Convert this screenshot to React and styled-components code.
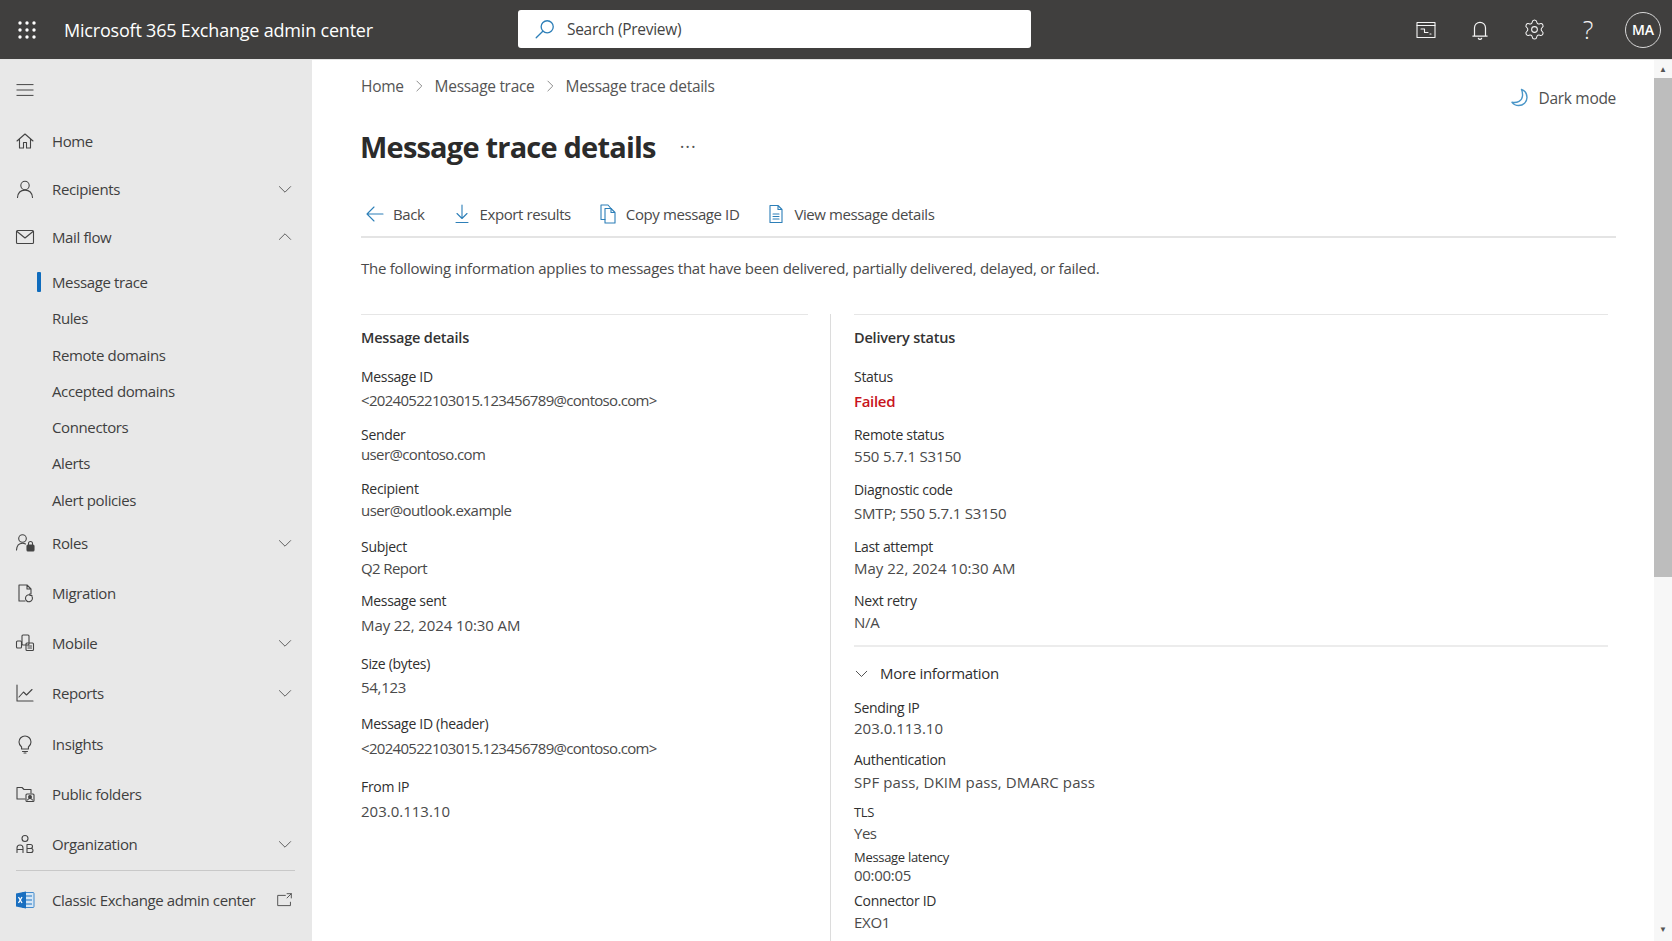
import styled, { createGlobalStyle } from 'styled-components';
import { Settings } from 'lucide-react';

const GlobalStyle = createGlobalStyle`
    html, body {
        margin: 0;
        height: 100%;
        overflow: hidden;
        background: #fff;
        font-family: "Open Sans", "Noto Sans", "Liberation Sans", sans-serif;
        color: #3b3a39;
    }
    * { box-sizing: border-box; }
`;

const Wrap = styled.div`
    display: flex;
    flex-direction: column;
    width: 1672px;
    height: 941px;
    overflow: hidden;
`;

const TopBar = styled.header`
    display: flex;
    align-items: center;
    flex: 0 0 60px;
    height: 60px;
    background: #403f3e;
    border-bottom: 1px solid #e4e4e4;
    color: #fff;
`;

const Waffle = styled.div`
    display: flex;
    justify-content: center;
    width: 54px;
    color: #fff;
`;

const Brand = styled.div`
    width: 454px;
    margin-left: 10px;
    font-size: 18px;
    font-weight: 500;
    letter-spacing: -0.2px;
`;

const SearchBox = styled.div`
    display: flex;
    align-items: center;
    gap: 11px;
    width: 513px;
    height: 38px;
    margin-top: -2px;
    padding-left: 16px;
    background: #fff;
    border-radius: 3px;
    color: #444;
    font-size: 15.5px;
    letter-spacing: -0.3px;
`;

const TopIcons = styled.div`
    display: flex;
    align-items: center;
    margin-left: auto;
    padding-right: 11px;
`;

const TopIcon = styled.div`
    display: flex;
    align-items: center;
    justify-content: center;
    width: 54px;
    color: #f4f4f4;
`;

const HelpMark = styled.span`
    font-size: 25px;
    line-height: 1;
    font-weight: 300;
    color: #f4f4f4;
`;

const Avatar = styled.div`
    display: flex;
    align-items: center;
    justify-content: center;
    width: 36px;
    height: 36px;
    margin-left: 10px;
    border: 1px solid #d8d8d8;
    border-radius: 50%;
    font-size: 14px;
    font-weight: 600;
`;

const Body = styled.div`
    display: flex;
    flex: 1;
    min-height: 0;
`;

const Sidebar = styled.nav`
    flex: 0 0 312px;
    background: #e8e8e8;
`;

const Burger = styled.div`
    display: flex;
    align-items: flex-start;
    height: 57px;
    padding: 21px 0 0 16px;
    color: #444;
`;

const NavRow = styled.div`
    display: flex;
    align-items: center;
    height: ${(p) => p.$h}px;
    padding: 0 19px 0 15px;
    font-size: 15px;
    letter-spacing: -0.38px;
    color: #3f3f3f;
`;

const NavIcon = styled.span`
    display: flex;
    justify-content: center;
    width: 20px;
    margin-right: 17px;
    color: #444;
`;

const Chevron = styled.span`
    display: flex;
    margin-left: auto;
    color: #4c4c4c;
`;

const SubList = styled.div`
    margin-top: 3px;
`;

const SubRow = styled.div`
    display: flex;
    align-items: center;
    position: relative;
    height: 36.25px;
    padding-left: 52px;
    font-size: 15px;
    letter-spacing: -0.38px;
    color: #3f3f3f;
`;

const ActiveBar = styled.span`
    position: absolute;
    left: 37px;
    top: 8px;
    width: 4px;
    height: 20px;
    border-radius: 1px;
    background: #0f6cbd;
`;

const NavDivider = styled.div`
    height: 1px;
    margin: 1px 17px 0 16px;
    background: #c8c8c8;
`;

const Main = styled.main`
    display: flex;
    flex: 1;
    min-width: 0;
`;

const Content = styled.div`
    display: flex;
    flex-direction: column;
    flex: 1;
    min-width: 0;
    padding: 14px 38px 0 49px;
`;

const TopRow = styled.div`
    display: flex;
    justify-content: space-between;
    align-items: flex-start;
    height: 50px;
`;

const Crumbs = styled.div`
    display: flex;
    align-items: center;
    height: 24px;
    font-size: 15.5px;
    letter-spacing: -0.3px;
    color: #555;
`;

const CrumbSep = styled.span`
    display: flex;
    margin: 0 8.5px;
    color: #777;
`;

const DarkMode = styled.div`
    display: flex;
    align-items: center;
    gap: 8px;
    margin-top: 13px;
    font-size: 15.5px;
    letter-spacing: -0.3px;
    color: #505050;
`;

const TitleRow = styled.div`
    display: flex;
    align-items: center;
    gap: 24px;
    margin-top: 2px;
    height: 40px;
`;

const Title = styled.h1`
    margin: 0 0 0 -1px;
    font-size: 29px;
    font-weight: 700;
    letter-spacing: -0.8px;
    color: #2b2b2b;
`;

const More = styled.span`
    font-size: 18px;
    letter-spacing: 1px;
    color: #555;
`;

const Toolbar = styled.div`
    display: flex;
    align-items: center;
    gap: 27px;
    height: 41px;
    margin-top: 31px;
    padding: 0 0 5px 4px;
    border-bottom: 2px solid #e4e4e4;
`;

const ToolButton = styled.div`
    display: flex;
    align-items: center;
    gap: 8px;
    font-size: 15px;
    letter-spacing: -0.4px;
    color: #4a4a4a;
`;

const ToolIcon = styled.span`
    display: flex;
    color: #2d7fb8;
`;

const Intro = styled.p`
    margin: 19px 0 0;
    font-size: 15px;
    line-height: 22px;
    letter-spacing: -0.25px;
    color: #4a4a4a;
`;

const Columns = styled.div`
    display: flex;
    flex: 1;
    margin-top: 35px;
    min-height: 0;
`;

const LeftCol = styled.section`
    flex: 0 0 447px;
    padding-top: 12px;
    border-top: 1px solid #e6e6e6;
`;

const RightCol = styled.section`
    flex: 1;
    margin-left: 22px;
    padding-left: 23px;
    padding-right: 8px;
    border-left: 1px solid #dcdcdc;
`;

const RightInner = styled.div`
    padding-top: 12px;
    border-top: 1px solid #e6e6e6;
`;

const Heading = styled.h2`
    margin: 0;
    font-size: 14.5px;
    line-height: 22px;
    font-weight: 600;
    letter-spacing: -0.2px;
    color: #333;
`;

const FieldBox = styled.div`
    margin-top: ${(p) => p.$e - 20}px;
`;

const Label = styled.div`
    font-size: ${(p) => (p.$small ? 13 : 14)}px;
    line-height: 20px;
    font-weight: 500;
    letter-spacing: -0.3px;
    color: #2f2f2f;
`;

const Value = styled.div`
    margin-top: ${(p) => p.$d - 22}px;
    font-size: 15px;
    line-height: 22px;
    letter-spacing: ${(p) => p.$sp}px;
    color: ${(p) => (p.$failed ? '#c8141c' : '#4a4a4a')};
    font-weight: ${(p) => (p.$failed ? 600 : 400)};
`;

const SectionLine = styled.div`
    height: 2px;
    margin-top: 12px;
    background: #ececec;
`;

const MoreInfo = styled.div`
    display: flex;
    align-items: center;
    gap: 11px;
    height: 24px;
    margin-top: 14px;
    font-size: 15px;
    font-weight: 500;
    letter-spacing: -0.3px;
    color: #2f2f2f;
`;

const ScrollTrack = styled.div`
    display: flex;
    flex-direction: column;
    align-items: stretch;
    flex: 0 0 18px;
    background: #f7f7f7;
`;

const ScrollArrow = styled.div`
    display: flex;
    justify-content: center;
    align-items: center;
    height: 18px;
    margin-top: ${(p) => p.$top || 0}px;
    color: #555;
    font-size: 8px;
    line-height: 1;
`;

const ScrollThumb = styled.div`
    height: 499px;
    background: #bdbdbd;
`;

const Ico = ({ size = 20, width = 1.1, children }) => (
    <svg width={size} height={size} viewBox="0 0 20 20" fill="none" stroke="currentColor" strokeWidth={width} strokeLinecap="round" strokeLinejoin="round">
        {children}
    </svg>
);

const ChevronDown = ({ size = 16 }) => (
    <Ico size={size}><path d="M3 7l7 7 7-7" /></Ico>
);
const ChevronUp = () => (
    <Ico size={16}><path d="M3 13l7-7 7 7" /></Ico>
);
const ChevronRight = () => (
    <Ico size={14} width={1.2}><path d="M7 3l7 7-7 7" /></Ico>
);

const navIcons = {
    home: <path d="M2 10l8-7 8 7M4.500 8v9h4v-5.500h3V17h4V8" />,
    person: <><circle cx="10" cy="6.500" r="4.200" /><path d="M2.500 18.500c.4-4.600 3.300-7.400 7.500-7.400s7.100 2.800 7.500 7.400" /></>,
    mail: <><rect x="1.500" y="3.500" width="17" height="13" rx="1" /><path d="M2 4.500l8 6.500 8-6.500" /></>,
    roles: <><circle cx="7.500" cy="5.500" r="3.800" /><path d="M1.500 17c.3-4.300 2.600-6.800 6-6.800 1.200 0 2.200.3 3 .8" /><rect x="12" y="12" width="7" height="6" rx="1" fill="currentColor" /><path d="M13.500 12v-1.500a2 2 0 014 0V12" /></>,
    migration: <><path d="M4 18V2h8l4 4v5M12 2v4h4M4 18h6" /><path d="M17 13.500a3.500 3.500 0 11-2-1.600M15 10.500v2h2" /></>,
    mobile: <><rect x="7" y="2" width="7" height="10" rx="1" /><rect x="1.500" y="8" width="5" height="7" rx="1" /><rect x="11" y="10" width="7.500" height="7.500" rx="1" /><path d="M13 13h3.500M13 15h3.500" /></>,
    reports: <><path d="M2 2v16h16" /><path d="M4 14l4.500-5 3 3 5.500-5.500" /></>,
    insights: <><path d="M6.600 13c-1.500-1.200-2.600-2.800-2.600-5a6 6 0 0112 0c0 2.200-1.100 3.800-2.600 5v2H6.600z" /><path d="M7.500 17.500h5M9 19h2" /></>,
    folders: <><path d="M2 15V3.500h5l2 2h7V9M2 15h8" /><rect x="11" y="10" width="8" height="7.500" rx="1" /><circle cx="15" cy="13" r="1.400" fill="currentColor" /><path d="M12.500 16c.6-1 1.400-1.500 2.500-1.500s1.900.5 2.500 1.500" /></>,
    org: <><circle cx="10" cy="4.500" r="3" /><path d="M2 18.500v-4.500a3 3 0 016 0v4.500M2 15.500h6M12 18.500v-8h3.500a2 2 0 010 4H12h4a2 2 0 010 4z" /></>,
};

const navTop = [
    { icon: 'home', label: 'Home' },
    { icon: 'person', label: 'Recipients', chevron: 'down' },
    { icon: 'mail', label: 'Mail flow', chevron: 'up' },
];

const subItems = ['Message trace', 'Rules', 'Remote domains', 'Accepted domains', 'Connectors', 'Alerts', 'Alert policies'];

const navBottom = [
    { icon: 'roles', label: 'Roles', chevron: 'down' },
    { icon: 'migration', label: 'Migration' },
    { icon: 'mobile', label: 'Mobile', chevron: 'down' },
    { icon: 'reports', label: 'Reports', chevron: 'down' },
    { icon: 'insights', label: 'Insights' },
    { icon: 'folders', label: 'Public folders' },
    { icon: 'org', label: 'Organization', chevron: 'down' },
];

const leftFields = [
    { label: 'Message ID', value: '<20240522103015.123456789@contoso.com>', e: 38, d: 24, sp: -0.69 },
    { label: 'Sender', value: 'user@contoso.com', e: 34, d: 20, sp: -0.63 },
    { label: 'Recipient', value: 'user@outlook.example', e: 34, d: 22, sp: -0.55 },
    { label: 'Subject', value: 'Q2 Report', e: 36, d: 22, sp: -0.6 },
    { label: 'Message sent', value: 'May 22, 2024 10:30 AM', e: 32, d: 25, sp: -0.1 },
    { label: 'Size (bytes)', value: '54,123', e: 38, d: 24, sp: -0.3 },
    { label: 'Message ID (header)', value: '<20240522103015.123456789@contoso.com>', e: 36, d: 25, sp: -0.69 },
    { label: 'From IP', value: '203.0.113.10', e: 38, d: 25, sp: 0 },
];

const statusFields = [
    { label: 'Status', value: 'Failed', e: 38, d: 25, failed: true, sp: -0.3 },
    { label: 'Remote status', value: '550 5.7.1 S3150', e: 33, d: 22, sp: -0.16 },
    { label: 'Diagnostic code', value: 'SMTP; 550 5.7.1 S3150', e: 33, d: 24, sp: -0.2 },
    { label: 'Last attempt', value: 'May 22, 2024 10:30 AM', e: 33, d: 22, sp: 0 },
    { label: 'Next retry', value: 'N/A', e: 32, d: 22, sp: -0.3 },
];

const moreFields = [
    { label: 'Sending IP', value: '203.0.113.10', e: 33, d: 21, sp: 0 },
    { label: 'Authentication', value: 'SPF pass, DKIM pass, DMARC pass', e: 31, d: 23, sp: 0.1 },
    { label: 'TLS', value: 'Yes', e: 29, d: 22, small: true, sp: -0.5 },
    { label: 'Message latency', value: '00:00:05', e: 23, d: 19, small: true, sp: -0.3 },
    { label: 'Connector ID', value: 'EXO1', e: 25, d: 22, sp: -0.3 },
];

const Field = ({ label, value, e, d, failed, small, sp }) => (
    <FieldBox $e={e}>
        <Label $small={small}>{label}</Label>
        <Value $d={d} $failed={failed} $sp={sp}>{value}</Value>
    </FieldBox>
);

const NavItem = ({ icon, label, chevron, h }) => (
    <NavRow $h={h}>
        <NavIcon><Ico size={20}>{navIcons[icon]}</Ico></NavIcon>
        {label}
        {chevron && <Chevron>{chevron === 'up' ? <ChevronUp /> : <ChevronDown />}</Chevron>}
    </NavRow>
);

const App = () => (
    <Wrap>
        <GlobalStyle />
        <TopBar>
            <Waffle>
                <svg width="18" height="18" viewBox="0 0 18 18" fill="currentColor">
                    {[2, 9, 16].map((y) => [2, 9, 16].map((x) => <circle key={x + '-' + y} cx={x} cy={y} r="1.7" />))}
                </svg>
            </Waffle>
            <Brand>Microsoft 365 Exchange admin center</Brand>
            <SearchBox>
                <svg width="22" height="22" viewBox="0 0 20 20" fill="none" stroke="#2d7fb8" strokeWidth="1.2" strokeLinecap="round">
                    <circle cx="12" cy="8" r="5.500" />
                    <path d="M8 12l-6 6" />
                </svg>
                Search (Preview)
            </SearchBox>
            <TopIcons>
                <TopIcon>
                    <Ico>
                        <rect x="1" y="2.500" width="18" height="15" />
                        <path d="M1 5.500h18M5 9h3.500v3.500H12M14 14h1" />
                    </Ico>
                </TopIcon>
                <TopIcon>
                    <Ico size={22}>
                        <path d="M5 15V8a5 5 0 0110 0v7M3.500 15.500h13M8.500 17.500a1.600 1.600 0 003 0" />
                    </Ico>
                </TopIcon>
                <TopIcon><Settings size={23} strokeWidth={1.1} /></TopIcon>
                <TopIcon><HelpMark>?</HelpMark></TopIcon>
                <Avatar>MA</Avatar>
            </TopIcons>
        </TopBar>
        <Body>
            <Sidebar>
                <Burger>
                    <Ico size={18}><path d="M1 4h18M1 10h18M1 16h18" /></Ico>
                </Burger>
                {navTop.map((item) => <NavItem key={item.label} {...item} h={48} />)}
                <SubList>
                    {subItems.map((label, i) => (
                        <SubRow key={label}>
                            {i === 0 && <ActiveBar />}
                            {label}
                        </SubRow>
                    ))}
                </SubList>
                {navBottom.map((item) => <NavItem key={item.label} {...item} h={50.2} />)}
                <NavDivider />
                <NavRow $h={58}>
                    <NavIcon>
                        <svg width="20" height="20" viewBox="0 0 20 20">
                            <rect x="7" y="2.500" width="12" height="15" rx="1" fill="#d6e6f5" stroke="#1a74c4" strokeWidth="0.8" />
                            <path d="M10 6h7M10 10h7M10 14h7" stroke="#1a74c4" strokeWidth="1" />
                            <path d="M1 3.500l10-2v17l-10-2z" fill="#1a6fc0" />
                            <path d="M3.500 7l3.500 6M7 7l-3.500 6" stroke="#fff" strokeWidth="1.300" />
                        </svg>
                    </NavIcon>
                    Classic Exchange admin center
                    <Chevron>
                        <Ico size={17}><path d="M11 4H2v12h15v-4M13 2h5v5M18 2l-5 5" /></Ico>
                    </Chevron>
                </NavRow>
            </Sidebar>
            <Main>
                <Content>
                    <TopRow>
                        <Crumbs>
                            Home
                            <CrumbSep><ChevronRight /></CrumbSep>
                            Message trace
                            <CrumbSep><ChevronRight /></CrumbSep>
                            Message trace details
                        </Crumbs>
                        <DarkMode>
                            <svg width="20" height="20" viewBox="0 0 20 20" fill="none" stroke="#4a96c8" strokeWidth="1.400" strokeLinejoin="round">
                                <path d="M11.500 1.500c3.500 1.200 5.500 4.300 5.500 8 0 4.500-3.800 8-8.300 8-3 0-5.200-1.200-6.700-3.200 5.300.8 10-1.300 10.500-6.300.2-2.200-.1-4.400-1-6.500z" />
                            </svg>
                            Dark mode
                        </DarkMode>
                    </TopRow>
                    <TitleRow>
                        <Title>Message trace details</Title>
                        <More>···</More>
                    </TitleRow>
                    <Toolbar>
                        <ToolButton>
                            <ToolIcon><Ico><path d="M18 10H2M9 3l-7 7 7 7" /></Ico></ToolIcon>
                            Back
                        </ToolButton>
                        <ToolButton>
                            <ToolIcon><Ico><path d="M10 1v13M5 9.500l5 5 5-5M4 18.500h12" /></Ico></ToolIcon>
                            Export results
                        </ToolButton>
                        <ToolButton>
                            <ToolIcon>
                                <Ico>
                                    <path d="M7 4.500h6l4 4V19H7zM13 4.500v4h4" />
                                    <path d="M7 15.500H3V1h7l3 3.500" />
                                </Ico>
                            </ToolIcon>
                            Copy message ID
                        </ToolButton>
                        <ToolButton>
                            <ToolIcon>
                                <Ico>
                                    <path d="M4 1.500h8l4 4v13H4zM12 1.500v4h4" />
                                    <path d="M7 10h6M7 12.500h6M7 15h6" />
                                </Ico>
                            </ToolIcon>
                            View message details
                        </ToolButton>
                    </Toolbar>
                    <Intro>The following information applies to messages that have been delivered, partially delivered, delayed, or failed.</Intro>
                    <Columns>
                        <LeftCol>
                            <Heading>Message details</Heading>
                            {leftFields.map((f) => <Field key={f.label} {...f} />)}
                        </LeftCol>
                        <RightCol>
                            <RightInner>
                                <Heading>Delivery status</Heading>
                                {statusFields.map((f) => <Field key={f.label} {...f} />)}
                                <SectionLine />
                                <MoreInfo>
                                    <ChevronDown size={15} />
                                    More information
                                </MoreInfo>
                                {moreFields.map((f) => <Field key={f.label} {...f} />)}
                            </RightInner>
                        </RightCol>
                    </Columns>
                </Content>
                <ScrollTrack>
                    <ScrollArrow>▲</ScrollArrow>
                    <ScrollThumb />
                    <ScrollArrow $top={343}>▼</ScrollArrow>
                </ScrollTrack>
            </Main>
        </Body>
    </Wrap>
);

export default App;
